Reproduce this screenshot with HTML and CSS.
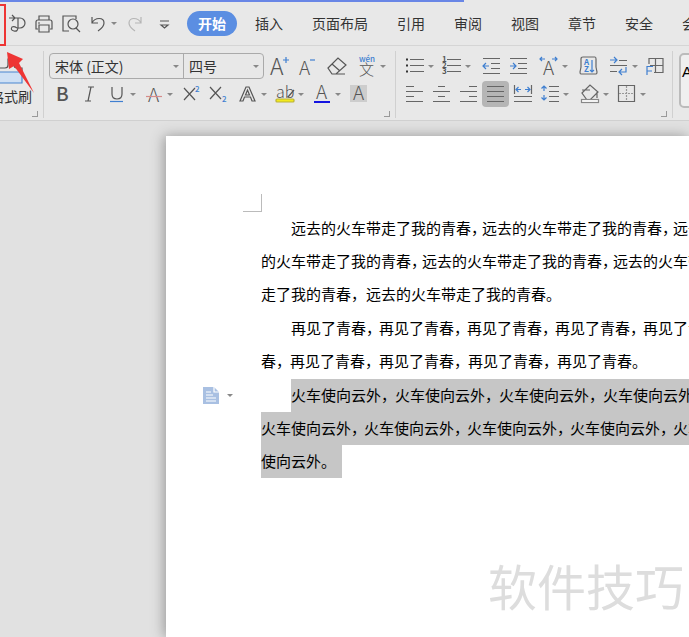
FILE: index.html
```html
<!DOCTYPE html>
<html lang="zh-CN">
<head>
    <meta charset="UTF-8">
    <meta name="viewport" content="width=device-width, initial-scale=1.0">
    <title>文字文稿</title>
    <link rel="stylesheet" href="styles.css">
</head>
<body>
    <div class="title-strip"></div>
    <header class="menu-bar">
        <div class="quick-access">
            <button type="button" class="tool" aria-label="输出为PDF"><svg viewBox="0 0 27 26"><path d="M6 7h6M9 4l3 3-3 3M12 7h5a5 5 0 0 1 0 10h-3M15 7v9q0 5-4 4-4-1-2-4 2-1 5 1"/></svg></button>
            <button type="button" class="tool" aria-label="打印"><svg viewBox="0 0 27 26"><path d="M9 9V5h10v4M8 18H6v-7q0-2 2-2h12q2 0 2 2v7h-2M9 14h10v7H9zM8 12h2"/></svg></button>
            <button type="button" class="tool" aria-label="打印预览"><svg viewBox="0 0 27 26"><path d="M12 20H6V5h13v3M19 17l4 4"/><circle cx="16" cy="13" r="5"/></svg></button>
            <button type="button" class="tool drop" aria-label="撤销"><svg viewBox="0 0 27 26"><path d="M8 6v6h6M8 12c3-6 12-6 12 0 0 4-3 6-6 8"/></svg></button>
            <button type="button" class="tool pale" aria-label="恢复"><svg viewBox="0 0 27 26"><path d="M20 6v6h-6M20 12c-3-6-12-6-12 0 0 4 3 6 6 8"/></svg></button>
            <button type="button" class="tool apart" aria-label="自定义快速访问工具栏"><svg viewBox="0 0 27 26"><path d="M9 10h9M10 14l3.500 3 3.500-3z"/></svg></button>
        </div>
        <nav class="tabs">
            <a href="#" class="active">开始</a>
            <a href="#">插入</a>
            <a href="#">页面布局</a>
            <a href="#">引用</a>
            <a href="#">审阅</a>
            <a href="#">视图</a>
            <a href="#">章节</a>
            <a href="#">安全</a>
            <a href="#">会员专享</a>
        </nav>
    </header>

    <section class="ribbon">
        <div class="group clipboard">
            <button type="button" class="painter">
                <svg viewBox="0 0 42 34"><path class="pale-fill" d="M6 20h26v11H6z"/><path d="M7 20v-4h8q3 0 3-3V7h6v6q0 3 3 3h5v4"/></svg>
                <span>格式刷</span>
            </button>
        </div>

        <div class="group">
            <div class="row">
                <div class="combo">
                    <label class="font-name"><select aria-label="字体"><option>宋体 (正文)</option></select></label>
                    <label class="font-size"><select aria-label="字号"><option>四号</option></select></label>
                </div>
                <button type="button" class="tool" aria-label="增大字号"><svg viewBox="0 0 27 26"><text class="big" x="4" y="22">A</text><path class="blue" d="M17 7h6M20 4v6"/></svg></button>
                <button type="button" class="tool" aria-label="减小字号"><svg viewBox="0 0 27 26"><text class="mid" x="6" y="22">A</text><path class="blue" d="M17 7h5"/></svg></button>
                <button type="button" class="tool apart" aria-label="清除格式"><svg viewBox="0 0 27 26"><path d="M5 15L15 5l8 7-10 9H9zM9 11l8 7M12 21h10"/></svg></button>
                <button type="button" class="tool drop apart" aria-label="拼音指南"><svg viewBox="0 0 27 26"><text class="han" x="6" y="22">文</text><text class="tiny blue-text" x="6" y="9">wén</text></svg></button>
            </div>
            <div class="row">
                <button type="button" class="tool" aria-label="加粗"><svg viewBox="0 0 27 26"><text class="bold" x="7" y="20">B</text></svg></button>
                <button type="button" class="tool" aria-label="倾斜"><svg viewBox="0 0 27 26"><path d="M12 6h6M9 20h6M15 6l-3 14"/></svg></button>
                <button type="button" class="tool drop" aria-label="下划线"><svg viewBox="0 0 27 26"><path d="M9 6v7q0 5 5 5t5-5V6"/><path class="blue" d="M7 20.500h13"/></svg></button>
                <button type="button" class="tool drop" aria-label="删除线"><svg viewBox="0 0 27 26"><text class="mid" x="8" y="21">A</text><path class="rose" d="M6 15.500h16"/></svg></button>
                <button type="button" class="tool" aria-label="上标"><svg viewBox="0 0 27 26"><path d="M7 7l11 12M18 7L7 19"/><text class="tiny blue-text" x="18" y="11">2</text></svg></button>
                <button type="button" class="tool" aria-label="下标"><svg viewBox="0 0 27 26"><path d="M6 6l11 12M17 6L6 18"/><text class="tiny blue-text" x="18" y="21">2</text></svg></button>
                <button type="button" class="tool drop apart" aria-label="文字效果"><svg viewBox="0 0 27 26"><path d="M6 20l6-14h3l6 14h-3l-1.500-4h-6L9 20zM11.500 14h4l-2-5z"/></svg></button>
                <button type="button" class="tool drop" aria-label="突出显示"><svg viewBox="0 0 27 26"><text class="ab" x="5" y="17">ab</text><path d="M23 9l-6 7"/><rect class="yellow" x="5" y="18" width="18" height="3" rx="1"/></svg></button>
                <button type="button" class="tool drop" aria-label="字体颜色"><svg viewBox="0 0 27 26"><text class="mid" x="8" y="18">A</text><path class="ink" d="M6 21h16"/></svg></button>
                <button type="button" class="tool" aria-label="字符底纹"><svg viewBox="0 0 27 26"><rect class="shade" x="5" y="4" width="17" height="17"/><text class="mid" x="8" y="19">A</text></svg></button>
            </div>
        </div>

        <div class="group paragraph">
            <div class="row">
                <button type="button" class="tool drop" aria-label="项目符号"><svg viewBox="0 0 27 26"><path d="M9 6.500h14M9 12.500h14M9 18.500h14"/><path class="dots" d="M5 6.500h2M5 12.500h2M5 18.500h2"/></svg></button>
                <button type="button" class="tool drop" aria-label="编号"><svg viewBox="0 0 27 26"><path d="M9 6.500h14M9 12.500h14M9 18.500h14"/><text class="num" x="4" y="9">1</text><text class="num" x="4" y="15">2</text><text class="num" x="4" y="21">3</text></svg></button>
                <button type="button" class="tool apart" aria-label="减少缩进量"><svg viewBox="0 0 27 26"><path d="M5 5.500h17M13 10.500h9M13 15.500h9M5 20.500h17"/><path class="blue" d="M11 13H5M8 10l-3 3 3 3"/></svg></button>
                <button type="button" class="tool" aria-label="增加缩进量"><svg viewBox="0 0 27 26"><path d="M5 5.500h17M13 10.500h9M13 15.500h9M5 20.500h17"/><path class="blue" d="M5 13h6M8 10l3 3-3 3"/></svg></button>
                <button type="button" class="tool drop apart" aria-label="字符缩放"><svg viewBox="0 0 27 26"><text class="mid" x="8" y="22">A</text><path class="blue" d="M10 6H5M7 4L5 6l2 2M17 6h5M20 4l2 2-2 2"/></svg></button>
                <button type="button" class="tool apart" aria-label="排序"><svg viewBox="0 0 27 26"><path d="M8 4h12q1 0 1 2v8l1 5q0 2-1 2H6q-1 0-1-2l1-5V6q0-2 2-2z"/><text class="num blue-text" x="9" y="12">A</text><text class="num blue-text" x="9" y="19">Z</text><path class="blue" d="M17 7v12M15 17l2 2 2-2"/></svg></button>
                <button type="button" class="tool drop apart" aria-label="换行"><svg viewBox="0 0 27 26"><path d="M14 7.500h8M5 12.500h17M5 18.500h7"/><path class="blue" d="M5 7h6M9 4l3 3-3 3M21 14v5h-6M17 16l-3 3 3 3"/></svg></button>
                <button type="button" class="tool" aria-label="制表位"><svg viewBox="0 0 27 26"><path d="M7 11V5.500h14v14h-9M13.500 5.500v14M8 12.500h13"/><path class="blue" d="M5 22v-8.500h6M5 18h5"/></svg></button>
            </div>
            <div class="row">
                <button type="button" class="tool" aria-label="左对齐"><svg viewBox="0 0 27 26"><path d="M5 5.500h8M5 10.500h17M5 15.500h8M5 20.500h17"/></svg></button>
                <button type="button" class="tool" aria-label="居中对齐"><svg viewBox="0 0 27 26"><path d="M10 5.500h7M5 10.500h17M10 15.500h7M5 20.500h17"/></svg></button>
                <button type="button" class="tool" aria-label="右对齐"><svg viewBox="0 0 27 26"><path d="M14 5.500h8M5 10.500h17M14 15.500h8M5 20.500h17"/></svg></button>
                <button type="button" class="tool pressed" aria-label="两端对齐"><svg viewBox="0 0 27 26"><path d="M5 5.500h17M5 10.500h17M5 15.500h17M5 20.500h17"/></svg></button>
                <button type="button" class="tool" aria-label="分散对齐"><svg viewBox="0 0 27 26"><path d="M5.500 4v9M22.500 4v9M5 15.500h18M5 20.500h18"/><path class="blue" d="M12 8.500H7M9.500 6L7 8.500 9.500 11M16 8.500h5M18.500 6l2.500 2.500-2.500 2.500"/></svg></button>
                <button type="button" class="tool drop" aria-label="行距"><svg viewBox="0 0 27 26"><path d="M13 5.500h10M13 10.500h10M13 15.500h10M13 20.500h10"/><path class="blue" d="M8 5v5M5.500 7.500L8 5l2.500 2.500M8 14v5M5.500 16.500L8 19l2.500-2.500"/></svg></button>
                <button type="button" class="tool drop apart" aria-label="底纹颜色"><svg viewBox="0 0 27 26"><path d="M6 12l8-8 8 7-8 8h-3zM6 9h8M21 11v6"/><rect class="paper" x="5.500" y="18.500" width="17" height="3"/></svg></button>
                <button type="button" class="tool drop" aria-label="边框"><svg viewBox="0 0 27 26"><path d="M5.500 4.500h16v16h-16z"/><path class="dash" d="M13.500 5v15M6 12.500h15"/></svg></button>
            </div>
        </div>

        <div class="gallery"><button type="button" class="style-card">AaBbCcDd</button></div>
    </section>

    <main class="workspace">
        <article class="sheet">
            <div class="crop-mark"></div>
            <p>
                <span class="line first tight"><span>远去的火车带走了我的青春，</span><span>远去的火车带走了我的青春，</span><span>远去</span></span>
                <span class="line tight"><span>的火车带走了我的青春，</span><span>远去的火车带走了我的青春，</span><span>远去的火车带</span></span>
                <span class="line"><span>走了我的青春，</span><span>远去的火车带走了我的青春。</span></span>
            </p>
            <p>
                <span class="line first snug"><span>再见了青春，</span><span>再见了青春，</span><span>再见了青春，</span><span>再见了青春，</span><span>再见了青</span></span>
                <span class="line close"><span>春，</span><span>再见了青春，</span><span>再见了青春，</span><span>再见了青春，</span><span>再见了青春。</span></span>
            </p>
            <p class="selected">
                <button type="button" class="paragraph-menu" aria-label="段落布局"><svg viewBox="0 0 16 17"><path d="M0 0h11l5 5v12H0z"/><path class="cut" d="M11 0v5h5M3 5h5M3 8h7M3 14h10M3 11h10"/></svg></button>
                <span class="line first close"><mark><span>火车使向云外，</span><span>火车使向云外，</span><span>火车使向云外，</span><span>火车使向云外，</span></mark></span>
                <span class="line snug"><mark><span>火车使向云外，</span><span>火车使向云外，</span><span>火车使向云外，</span><span>火车使向云外，</span><span>火车</span></mark></span>
                <span class="line"><mark class="end"><span>使向云外。</span></mark></span>
            </p>
            <div class="watermark">软件技巧</div>
        </article>
    </main>

    <div class="callout-box"></div>
    <svg class="callout-arrow" viewBox="0 0 30 48"><path d="M0 0L16 7l-4 4 15 30L7 14l-5 3z"/></svg>
</body>
</html>
```
FILE: styles.css
```css
* {
    box-sizing: border-box;
}

body {
    margin: 0;
    min-height: 100vh;
    display: flex;
    flex-direction: column;
    position: relative;
    overflow: hidden;
    background-color: #e8e8e8;
    color: #333;
    font-family: "Noto Sans CJK SC", sans-serif;
    font-size: 14px;
}

button, select {
    margin: 0;
    padding: 0;
    border: none;
    background: none;
    color: inherit;
    font: inherit;
}

svg {
    display: block;
    fill: none;
    stroke: #555;
    stroke-width: 1.2;
}

/* top bar */
.title-strip {
    width: 67.3%;
    height: 2px;
    background-color: #6986e6;
}

.menu-bar {
    height: 44px;
    display: flex;
    align-items: center;
    border-bottom: 1px solid #d5d5d5;
}

.quick-access {
    display: flex;
    flex: none;
    padding-left: 3px;
}

.tabs {
    flex: 1;
    min-width: 0;
    display: flex;
    gap: 29px;
    padding-left: 20px;
    overflow: hidden;
    white-space: nowrap;
}

.tabs a {
    flex: none;
    color: #333;
    line-height: 25px;
    text-decoration: none;
}

.tabs .active {
    margin: 0 -11px;
    padding: 0 11px;
    border-radius: 13px;
    background-color: #5b8ee2;
    color: #fff;
    font-weight: bold;
}

/* ribbon */
.ribbon {
    height: 75px;
    display: flex;
    padding-top: 5px;
    border-bottom: 1px solid #d0d0d0;
}

.group {
    flex: none;
    width: 352px;
    height: 67px;
    display: flex;
    flex-direction: column;
    gap: 2px;
    position: relative;
    padding: 2px 0 0 5px;
    border-right: 1px solid #d0d0d0;
}

.group::after {
    content: "";
    position: absolute;
    right: 5px;
    bottom: 1px;
    width: 5px;
    height: 5px;
    border: solid #999;
    border-width: 0 1px 1px 0;
}

.paragraph {
    width: 277px;
}

.paragraph svg {
    stroke: #666;
}

.clipboard {
    width: 44px;
    padding: 0;
}

.row {
    display: flex;
    height: 26px;
}

.tool {
    flex: none;
    width: 27px;
    height: 26px;
    display: flex;
    align-items: center;
}

.tool svg {
    flex: none;
    width: 27px;
    height: 26px;
}

.drop {
    width: 37px;
}

.drop::after, .combo label::after, .paragraph-menu::after {
    content: "";
    border: solid transparent;
    border-width: 3px 3px 0;
    border-top-color: #888;
}

.apart {
    margin-left: 3px;
}

.pale svg {
    stroke: #b5b5b5;
}

.pressed {
    border-radius: 4px;
    background-color: #b5b5b5;
}

.painter {
    width: 42px;
    margin-left: -10px;
    padding-top: 1px;
    text-align: center;
    line-height: 20px;
}

.painter svg {
    width: 42px;
    height: 34px;
}

.painter span {
    display: block;
    white-space: nowrap;
}

.pale-fill {
    fill: #cfe0f4;
    stroke: #4a86cf;
}

.combo {
    display: flex;
    width: 215px;
    margin-right: 2px;
    border: 1px solid #aaa;
    border-radius: 4px;
}

.combo label {
    display: flex;
    align-items: center;
    padding: 0 4px 0 5px;
}

.combo select {
    flex: 1;
    min-width: 0;
    appearance: none;
    outline: none;
}

.font-name {
    width: 134px;
    border-right: 1px solid #aaa;
}

.font-size {
    flex: 1;
}

/* icon parts */
.tool text {
    fill: #555;
    stroke: none;
    font-weight: 300;
}

.tool .big {
    font-size: 23px;
}

.tool .mid {
    font-size: 19px;
}

.tool .han {
    font-size: 15px;
}

.tool .bold {
    font-size: 19px;
    font-weight: 500;
}

.tool .ab {
    font-size: 16px;
}

.tool .tiny {
    font-size: 8px;
    font-weight: 500;
}

.tool .num {
    font-size: 8px;
    font-weight: 700;
}

.tool .blue-text {
    fill: #3f7fd0;
}

.blue {
    stroke: #3f7fd0;
}

.rose {
    stroke: #d58b8b;
}

.ink {
    stroke: #1414e0;
    stroke-width: 2;
}

.dots {
    stroke: #333;
    stroke-width: 2;
}

.dash {
    stroke-dasharray: 2 1;
    stroke: #999;
}

.yellow {
    fill: #f3ea1d;
    stroke: #b9b13a;
}

.shade {
    fill: #cdcdcd;
    stroke: none;
}

.paper {
    fill: #fff;
    stroke: #888;
}

.gallery {
    flex: 1;
    min-width: 0;
    padding: 2px 0 0 6px;
    overflow: hidden;
}

.style-card {
    width: 90px;
    height: 55px;
    padding: 0 0 18px 1px;
    border: 2px solid #bbb;
    border-radius: 5px;
    background-color: #efefef;
    color: #000;
    text-align: left;
    font-family: "Liberation Sans", Arial, sans-serif;
    font-size: 15px;
}

/* document */
.workspace {
    flex: 1;
    display: flex;
    padding: 15px 0 0 166px;
    background-color: #e1e1e1;
}

.sheet {
    flex: 1;
    min-width: 0;
    position: relative;
    padding: 58px 0 0 95px;
    background-color: #fff;
    box-shadow: -2px 0 12px #999;
    color: #000;
    font-size: 15px;
    line-height: 31px;
    white-space: nowrap;
}

.crop-mark {
    width: 19px;
    height: 18px;
    margin-left: -18px;
    border: solid #bbb;
    border-width: 0 1px 1px 0;
}

p {
    position: relative;
    margin: 0 0 1px;
}

.line {
    display: flex;
    height: 33px;
}

.first {
    padding-left: 30px;
}

/* punctuation is pulled in by a different amount on each justified line */
.tight span {
    margin-right: -4px;
}

.snug span {
    margin-right: -2px;
}

.close span {
    margin-right: -1px;
}

mark {
    display: flex;
    background-color: #c6c6c6;
    color: #000;
}

.end {
    padding-right: 6px;
}

.paragraph-menu {
    position: absolute;
    left: -58px;
    top: 8px;
    display: flex;
    align-items: center;
    gap: 8px;
}

.paragraph-menu svg {
    width: 16px;
    height: 17px;
    fill: #a9c0e2;
    stroke: none;
}

.paragraph-menu .cut {
    fill: none;
    stroke: #fff;
}

.watermark {
    position: absolute;
    right: 5px;
    bottom: 16px;
    color: #ddd;
    font-size: 49px;
    line-height: 72px;
}

/* red callout over the toolbar */
.callout-box {
    position: absolute;
    left: -20px;
    top: 4px;
    width: 26px;
    height: 42px;
    border: 2px solid #ee3534;
}

.callout-arrow {
    position: absolute;
    left: 7px;
    top: 52px;
    width: 30px;
    height: 48px;
    fill: #ee3534;
    stroke: none;
}
```
